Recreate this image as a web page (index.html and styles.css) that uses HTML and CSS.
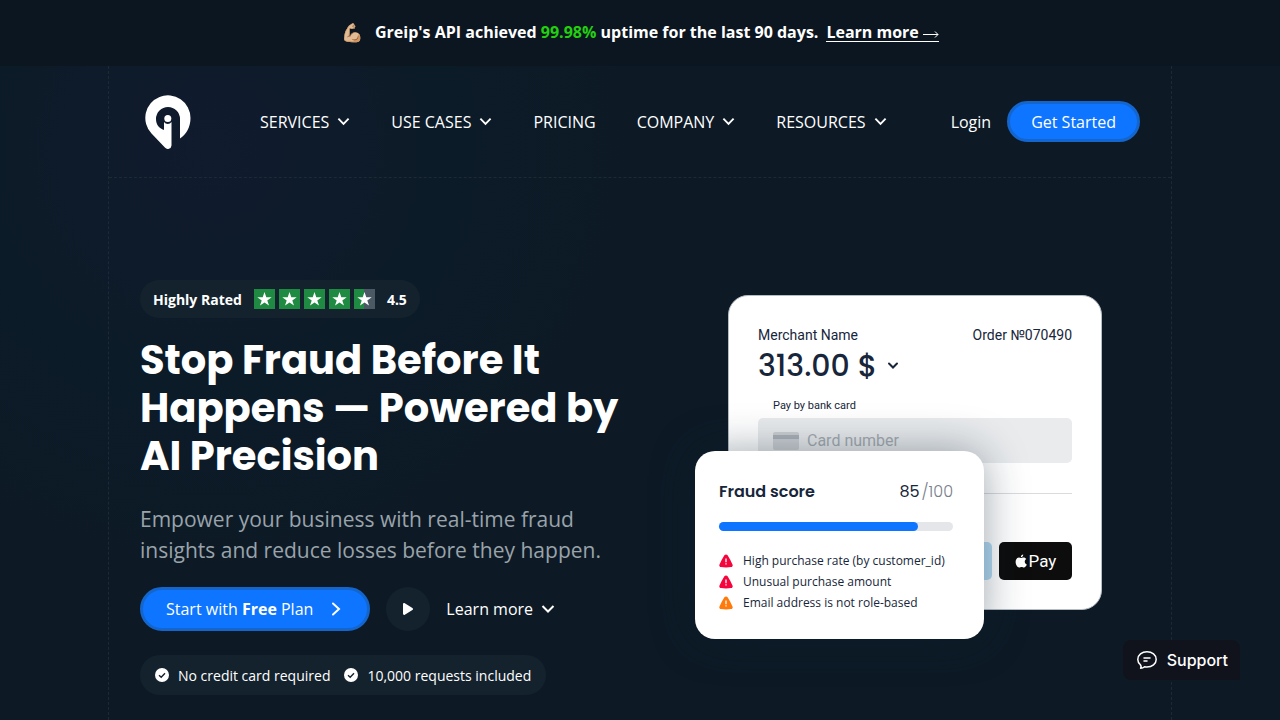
FILE: index.html
```html
<!DOCTYPE html>
<html lang="en">
<head>
    <meta charset="UTF-8">
    <meta name="viewport" content="width=device-width, initial-scale=1.0">
    <title>Greip - Stop Fraud Before It Happens</title>
    <link rel="stylesheet" href="styles.css">
</head>
<body>
    <!-- shared icons -->
    <svg class="sprite" aria-hidden="true">
        <symbol id="chevron" viewBox="0 0 14 14">
            <path d="M1.5 4l5.5 5.5L12.500 4" fill="none" stroke="currentColor" stroke-width="2"/>
        </symbol>
        <symbol id="star" viewBox="0 0 21 20">
            <path d="M10.500 3l1.800 5.200h5.400l-4.400 3.200 1.700 5.200-4.500-3.200L6 16.600l1.700-5.200-4.400-3.200h5.400z" fill="#fff"/>
        </symbol>
        <symbol id="check" viewBox="0 0 14 14">
            <circle cx="7" cy="7" r="7" fill="#fff"/>
            <path d="M4 7.200l2.200 2L10 5.200" fill="none" stroke="#14222e" stroke-width="1.400"/>
        </symbol>
        <symbol id="alert" viewBox="0 0 14 14">
            <path d="M5.400 1.300a1.900 1.900 0 0 1 3.200 0c1.800 2.900 3.600 6.200 4.900 9.200a1.800 1.800 0 0 1-1.500 2.600c-3.300.4-6.700.4-10 0A1.800 1.800 0 0 1 .5 10.500c1.300-3 3.100-6.300 4.900-9.200z" fill="currentColor"/>
            <path d="M7 4.500v3.700M7 9.200v1.400" stroke="#fff" stroke-width="1.300"/>
        </symbol>
    </svg>

    <div class="announcement">
        <span class="emoji">💪🏼</span>
        <span>Greip's API achieved <span class="uptime">99.98%</span> uptime for the last 90 days.</span>
        <a href="#">Learn more <svg width="16" height="8" viewBox="0 0 16 8"><path d="M0 4.500h15M12 1.500l3 3-3 3" fill="none" stroke="currentColor"/></svg></a>
    </div>

    <div class="page">
        <header class="header">
            <a class="logo" href="#" aria-label="Greip">
                <svg width="46" height="54" viewBox="0 0 46 54">
                    <path d="M35 43.500V24a12 12 0 0 0-24 0c0 5.500 3 9.200 8 11V27a4.600 4.600 0 0 0 7.500 0V50.500a3.700 3.700 0 0 1-6.600 2L6.500 38.500A22.600 22.600 0 1 1 45.500 23c0 9-4 16-10.500 20.500z" fill="#fff"/>
                    <circle cx="22.800" cy="23.500" r="3.500" fill="#fff"/>
                </svg>
            </a>
            <nav class="nav">
                <button type="button">SERVICES <svg class="chevron"><use href="#chevron"/></svg></button>
                <button type="button">USE CASES <svg class="chevron"><use href="#chevron"/></svg></button>
                <a href="#">PRICING</a>
                <button type="button">COMPANY <svg class="chevron"><use href="#chevron"/></svg></button>
                <button type="button">RESOURCES <svg class="chevron"><use href="#chevron"/></svg></button>
            </nav>
            <div class="account">
                <a href="#">Login</a>
                <a class="btn btn-small" href="#">Get Started</a>
            </div>
        </header>

        <main class="hero">
            <section class="hero-text">
                <div class="pill rating">
                    <span>Highly Rated</span>
                    <span class="stars">
                        <svg><use href="#star"/></svg>
                        <svg><use href="#star"/></svg>
                        <svg><use href="#star"/></svg>
                        <svg><use href="#star"/></svg>
                        <svg class="half"><use href="#star"/></svg>
                    </span>
                    <span class="score">4.5</span>
                </div>
                <h1>Stop Fraud Before It Happens — Powered by AI Precision</h1>
                <p>Empower your business with real-time fraud insights and reduce losses before they happen.</p>
                <div class="actions">
                    <a class="btn btn-large" href="#">
                        <span>Start with <b>Free</b> Plan</span>
                        <svg width="10" height="14" viewBox="0 0 10 14"><path d="M2 1.500L8 7l-6 5.500" fill="none" stroke="currentColor" stroke-width="2" stroke-linecap="round"/></svg>
                    </a>
                    <button class="play" type="button" aria-label="Play video">
                        <svg width="12" height="14" viewBox="0 0 12 14"><path d="M1 2.200C1 1.200 2 .7 2.800 1.200l7.600 4.700c.8.500.8 1.600 0 2.100l-7.600 4.800c-.8.500-1.800 0-1.800-1z" fill="currentColor"/></svg>
                    </button>
                    <a class="more" href="#">Learn more <svg><use href="#chevron"/></svg></a>
                </div>
                <div class="pill perks">
                    <span><svg><use href="#check"/></svg>No credit card required</span>
                    <span><svg><use href="#check"/></svg>10,000 requests included</span>
                </div>
            </section>

            <section class="hero-visual">
                <div class="payment">
                    <div class="payment-row">
                        <span>Merchant Name</span>
                        <span>Order №070490</span>
                    </div>
                    <div class="amount">
                        313.00 $
                        <svg width="12" height="8" viewBox="0 0 12 8"><path d="M2 1.500l4 4 4-4" fill="none" stroke="currentColor" stroke-width="2" stroke-linecap="round"/></svg>
                    </div>
                    <label for="card-number">Pay by bank card</label>
                    <div class="card-field">
                        <svg width="26" height="18" viewBox="0 0 26 18"><rect width="26" height="18" rx="2" fill="#cdd0d4"/><path d="M0 3h26v4H0z" fill="#acb2b9"/></svg>
                        <input type="text" id="card-number" placeholder="Card number">
                    </div>
                    <hr>
                    <div class="methods">
                        <button class="method" type="button" aria-label="Other wallet"></button>
                        <button class="method apple" type="button">
                            <svg width="12" height="14" viewBox="0 0 12 14"><path d="M8.200.5c.1 1.500-1 2.700-2.300 2.700C5.800 1.800 6.900.7 8.200.5zM6 4c.7 0 1.400-.6 2.500-.6 1.200 0 2.200.6 2.800 1.500-2.300 1.400-2 4.600.5 5.600-.6 1.600-1.700 3-2.900 3-.9 0-1.300-.5-2.300-.5s-1.400.5-2.300.5C2.600 13.500.6 10.700.6 7.900c0-2.700 1.700-4.300 3.300-4.300.9 0 1.500.4 2.100.4z" fill="currentColor"/></svg>
                            Pay
                        </button>
                    </div>
                </div>

                <div class="fraud">
                    <div class="fraud-head">
                        <h2>Fraud score</h2>
                        <span class="points">85<small>/100</small></span>
                    </div>
                    <div class="bar"><div class="bar-fill" style="width: 85%"></div></div>
                    <ul>
                        <li><svg class="high"><use href="#alert"/></svg>High purchase rate (by customer_id)</li>
                        <li><svg class="high"><use href="#alert"/></svg>Unusual purchase amount</li>
                        <li><svg class="medium"><use href="#alert"/></svg>Email address is not role-based</li>
                    </ul>
                </div>
            </section>
        </main>
    </div>

    <button class="support" type="button">
        <svg width="20" height="20" viewBox="0 0 20 20" fill="none" stroke="currentColor" stroke-width="1.500" stroke-linecap="round" stroke-linejoin="round">
            <path d="M3.200 14.500C1.700 13.100.8 11.400.8 9.400.8 5 4.900 1.800 10 1.800s9.200 3.200 9.200 7.600-4.100 7.600-9.200 7.600c-.8 0-1.600-.1-2.400-.2-1 .9-2.300 1.500-4 1.500.7-.9.6-2.400-.4-3.800z"/>
            <path d="M7 8h6M7 11h3"/>
        </svg>
        Support
    </button>
</body>
</html>
```
FILE: styles.css
```css
* {
    box-sizing: border-box;
}

body {
    margin: 0;
    min-height: 100vh;
    font-family: "Open Sans", "Noto Sans", sans-serif;
    font-size: 16px;
    color: #fff;
    background: #0d1a26;
    background-image: radial-gradient(circle at 210px 150px, #101b2d 0, #0c1b28 240px, #0d1a26 420px);
}

a {
    color: inherit;
    text-decoration: none;
}

button {
    padding: 0;
    border: 0;
    background: none;
    color: inherit;
    font: inherit;
    cursor: pointer;
}

svg {
    flex-shrink: 0;
}

.sprite {
    position: absolute;
    width: 0;
    height: 0;
}

/* top bar */
.announcement {
    display: flex;
    justify-content: center;
    align-items: center;
    height: 66px;
    padding-bottom: 2px;
    background: #0c1620;
    font-weight: 700;
}

.emoji {
    margin-right: 12px;
    font-size: 18px;
    font-weight: 400;
}

.uptime {
    color: #22d010;
}

.announcement a {
    margin-left: 8px;
    line-height: 18px;
    border-bottom: 1px solid #fff;
}

.page {
    max-width: 1064px;
    min-height: 654px;
    margin: 0 auto;
    border: 1px dashed #1c2a36;
    border-width: 0 1px;
}

/* header */
.header {
    display: flex;
    align-items: center;
    height: 112px;
    padding: 0 31px;
    border-bottom: 1px dashed #1c2a36;
}

.logo {
    margin-left: 5px;
    height: 54px;
}

.nav {
    display: flex;
    gap: 41px;
    margin-left: 69px;
}

.nav button {
    display: flex;
    align-items: center;
    gap: 8px;
}

.chevron {
    width: 13px;
    height: 13px;
}

.account {
    display: flex;
    align-items: center;
    gap: 16px;
    margin-left: auto;
}

.btn {
    display: flex;
    align-items: center;
    border: 3px solid #1466cc;
    border-radius: 22px;
    background: #0d75ff;
}

.btn-small {
    height: 41px;
    padding: 0 21px;
}

.btn-large {
    gap: 18px;
    height: 44px;
    padding: 0 26px 0 23px;
}

/* hero */
.hero {
    display: grid;
    grid-template-columns: 1fr 1fr;
    padding: 102px 31px 24px;
}

.hero-text {
    display: flex;
    flex-direction: column;
    align-items: flex-start;
}

.pill {
    display: flex;
    align-items: center;
    border-radius: 20px;
    background: #14222e;
    font-size: 14px;
}

.rating {
    height: 38px;
    padding: 0 13px;
    gap: 12px;
    font-weight: 700;
}

.stars {
    display: flex;
    gap: 4px;
}

.stars svg {
    width: 21px;
    height: 20px;
    background: #1f8a41;
}

.stars .half {
    background: linear-gradient(90deg, #1f8a41 50%, #4b5964 50%);
}

.score {
    font-family: "Noto Sans", sans-serif;
}

h1, h2, .amount, .points {
    font-family: Poppins, Inter, sans-serif;
}

h1 {
    margin: 18px 0 0;
    font-size: 40px;
    line-height: 48px;
    font-weight: 700;
}

.hero-text p {
    margin: 24px 0 0;
    font-size: 21px;
    line-height: 31px;
    color: #9aa3aa;
}

.actions {
    display: flex;
    align-items: center;
    gap: 16px;
    margin: 21px 0 24px;
}

.play {
    display: flex;
    align-items: center;
    justify-content: center;
    width: 44px;
    height: 44px;
    border-radius: 50%;
    background: #14222e;
}

.more {
    display: flex;
    align-items: center;
    gap: 8px;
}

.more svg {
    width: 14px;
    height: 14px;
}

.perks {
    height: 40px;
    padding: 0 15px;
    gap: 14px;
}

.perks span {
    display: flex;
    align-items: center;
    gap: 9px;
}

.perks svg {
    width: 14px;
    height: 14px;
}

/* payment and fraud score cards */
.hero-visual {
    position: relative;
    justify-self: end;
    align-self: start;
    width: 407px;
    margin: 15px 38px 0 0;
    padding: 0 0 29px 33px;
}

.payment {
    padding: 29px;
    border: 1px solid #b5bcc3;
    border-radius: 20px;
    background: #fff;
    color: #17263a;
    font-family: Roboto, sans-serif;
}

.payment-row {
    display: flex;
    justify-content: space-between;
    font-size: 14px;
    line-height: 20px;
}

.amount {
    display: flex;
    align-items: center;
    gap: 10px;
    font-size: 30px;
    line-height: 42px;
    font-weight: 500;
}

.payment label {
    display: block;
    margin: 11px 0 4px 15px;
    font-size: 11px;
    line-height: 16px;
}

.card-field {
    display: flex;
    align-items: center;
    gap: 8px;
    height: 45px;
    padding: 0 15px;
    border-radius: 5px;
    background: #e9ebed;
}

.card-field input {
    flex: 1;
    min-width: 0;
    padding: 0;
    border: 0;
    outline: 0;
    background: none;
    font: 16px Roboto, sans-serif;
}

.card-field input::placeholder {
    color: #a5abb2;
    opacity: 1;
}

.payment hr {
    margin: 30px 0 48px;
    border: 0;
    border-top: 1px solid #d9dbdf;
}

.methods {
    display: flex;
    justify-content: flex-end;
    gap: 7px;
}

.method {
    display: flex;
    align-items: center;
    justify-content: center;
    gap: 2px;
    width: 73px;
    height: 38px;
    border-radius: 5px;
    background: #b2daf3;
}

.apple {
    background: #0d0d0d;
    color: #fff;
    font-size: 17px;
}

.fraud {
    position: absolute;
    left: 0;
    bottom: 0;
    width: 289px;
    padding: 28px 31px 26px 24px;
    border-radius: 20px;
    background: #fff;
    color: #17263a;
    box-shadow: 0 0 44px rgba(12, 32, 48, 0.4);
}

.fraud-head {
    display: flex;
    justify-content: space-between;
    line-height: 26px;
}

h2 {
    margin: 0;
    font-size: 16px;
    font-weight: 600;
}

.points small {
    margin-left: 2px;
    font-size: 16px;
    font-weight: 300;
    color: #77808b;
}

.bar {
    height: 9px;
    margin: 17px 0 19px;
    border-radius: 5px;
    background: #e4e6ea;
}

.bar-fill {
    height: 100%;
    border-radius: 5px;
    background: #0d75ff;
}

.fraud ul {
    margin: 0;
    padding: 0;
    list-style: none;
    font-size: 12px;
}

.fraud li {
    display: flex;
    align-items: center;
    gap: 10px;
    line-height: 21px;
    white-space: nowrap;
}

.fraud li svg {
    width: 14px;
    height: 14px;
}

.high {
    color: #f5053c;
}

.medium {
    color: #ff7a0a;
}

/* floating chat button */
.support {
    position: fixed;
    right: 40px;
    bottom: 40px;
    display: flex;
    align-items: center;
    gap: 10px;
    height: 40px;
    padding: 0 12px 0 14px;
    border-radius: 8px 8px 1px 8px;
    background: #10131b;
    font-family: Inter, sans-serif;
    font-weight: 500;
}
```
